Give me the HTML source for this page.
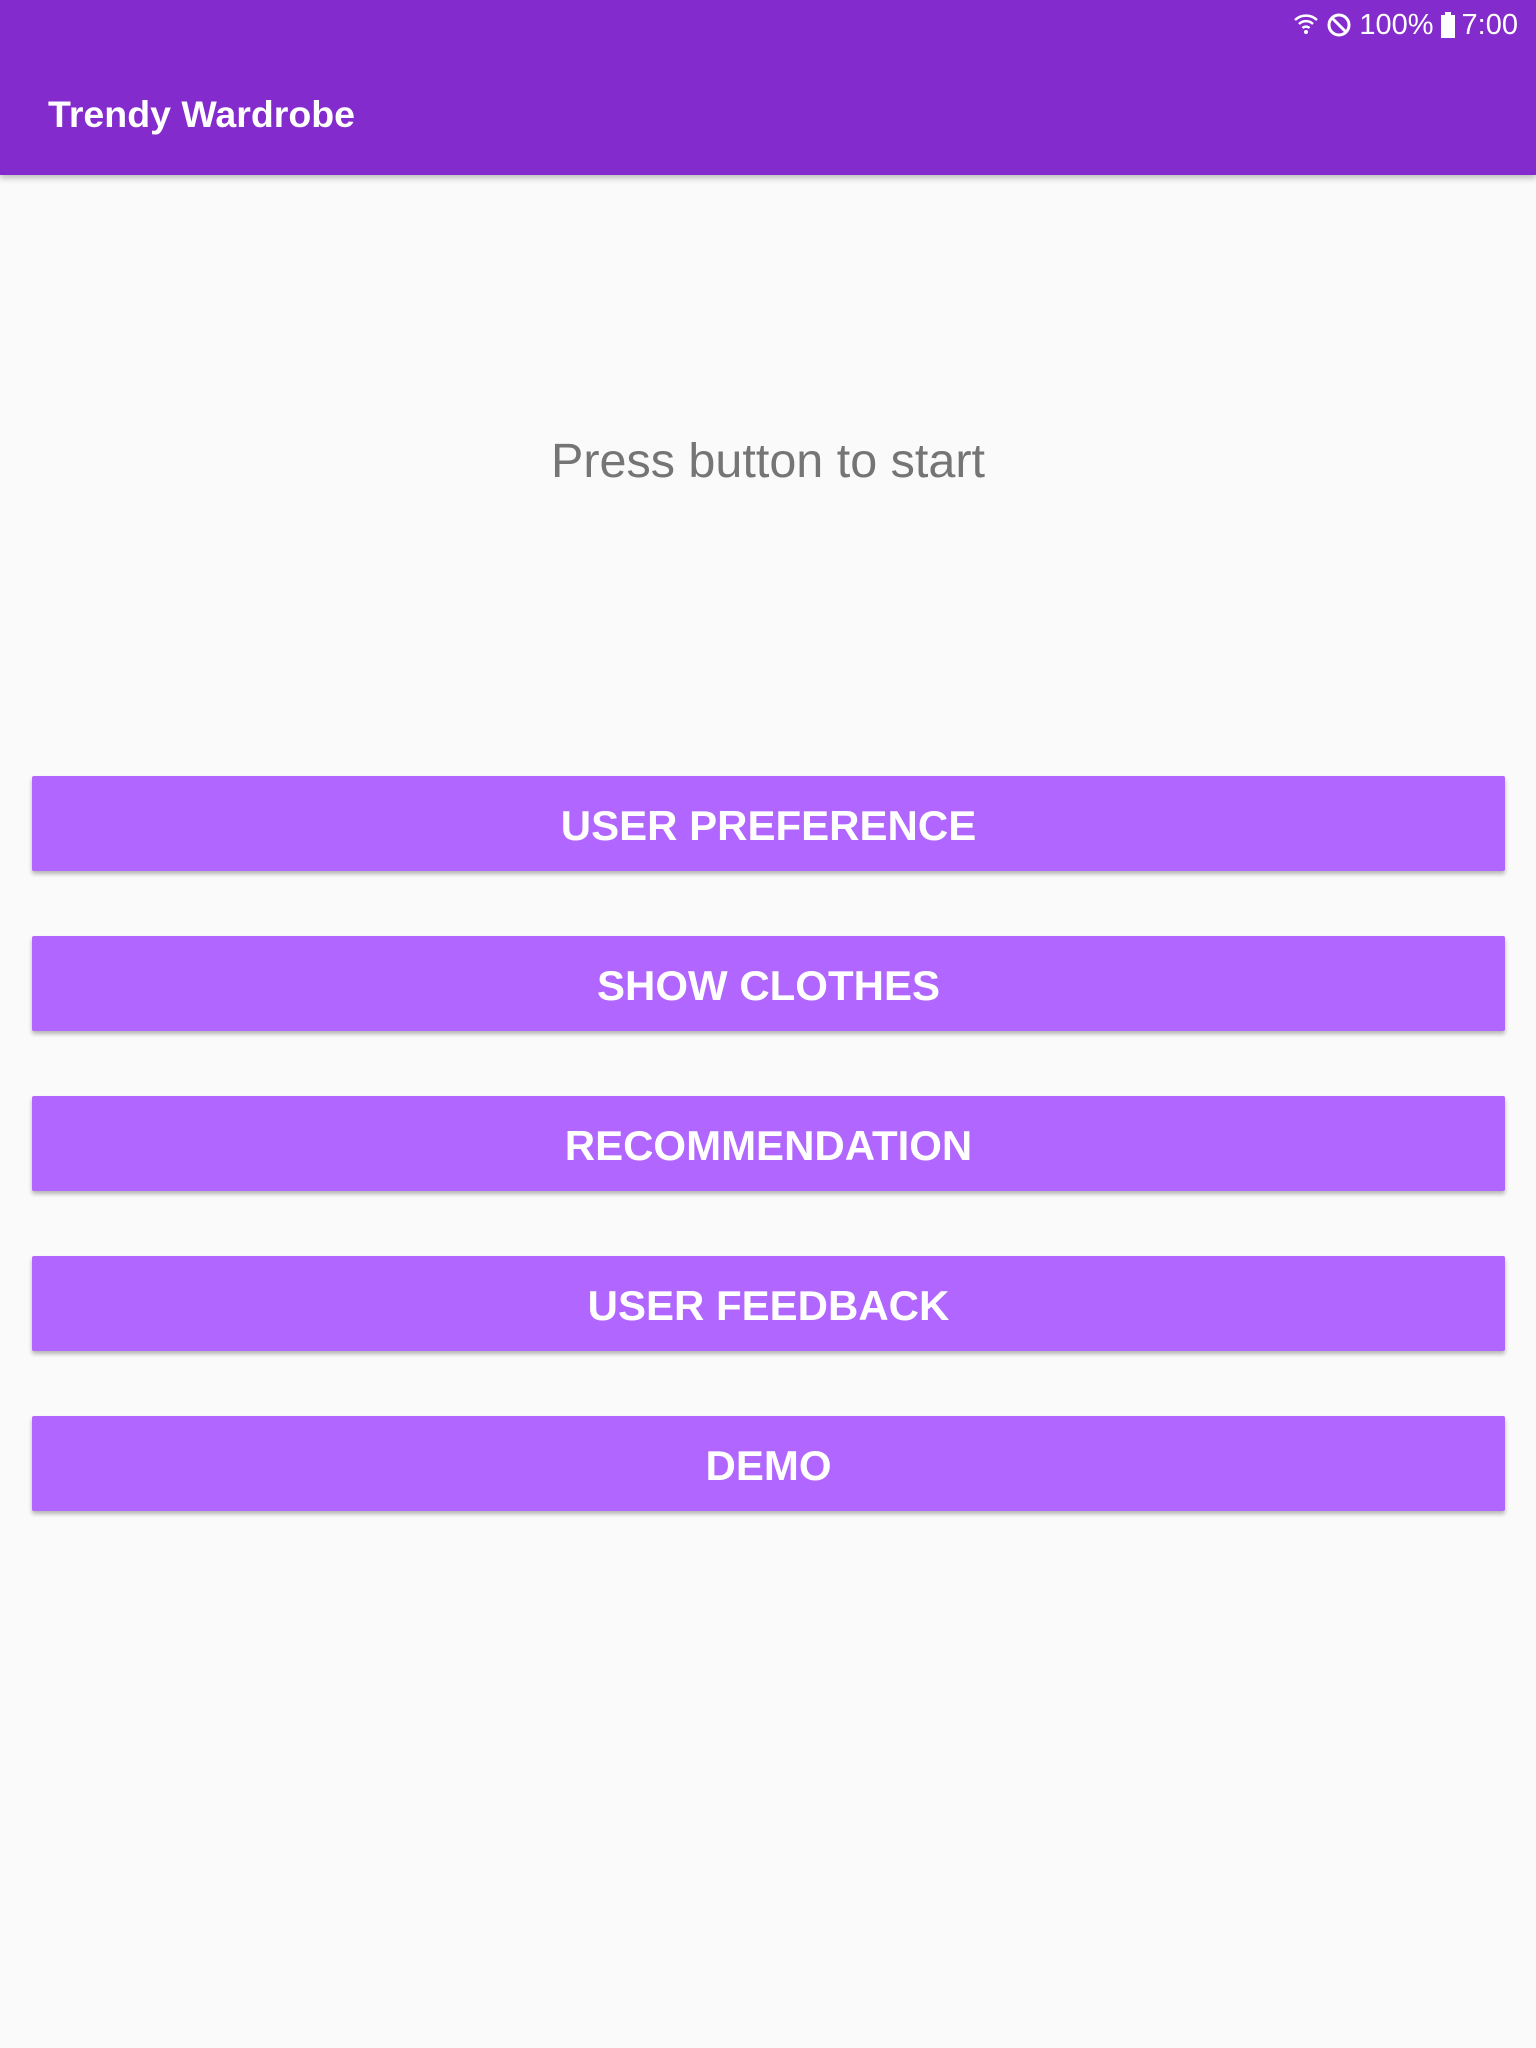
<!DOCTYPE html>
<html><head><meta charset="utf-8"><style>
body{margin:0;width:1536px;height:2048px;background:#fafafa;font-family:"Liberation Sans",sans-serif;position:relative;overflow:hidden}
.bar{position:absolute;left:0;top:0;width:1536px;height:175px;background:#832bcd;box-shadow:0 3px 6px rgba(0,0,0,.25)}
.title{position:absolute;left:48px;top:89px;color:#fff;font-size:37.5px;font-weight:bold;line-height:50px}
.status{position:absolute;right:18px;top:8px;color:#fff;font-size:29px;line-height:34px;display:flex;align-items:center;gap:6px}
.msg{position:absolute;left:0;width:1536px;top:431px;text-align:center;color:#757575;font-size:48.5px;line-height:60px}
.btn{position:absolute;left:32px;width:1473px;height:95px;background:#b066ff;box-shadow:0 3px 4px rgba(0,0,0,.28);color:#fff;font-size:42px;font-weight:bold;text-align:center;line-height:99px;border-radius:2px}
</style></head><body>
<div class="bar">
<div class="status">
<svg width="26" height="28" viewBox="0 0 26 28"><path d="M2 9a16 16 0 0 1 22 0M6 13a10 10 0 0 1 14 0M9.5 17a5 5 0 0 1 7 0" stroke="#fff" stroke-width="2.5" fill="none"/><circle cx="13" cy="21" r="2" fill="#fff"/></svg>
<svg width="28" height="28" viewBox="0 0 28 28"><circle cx="14" cy="14" r="10" stroke="#fff" stroke-width="3" fill="none"/><path d="M7 7l14 14" stroke="#fff" stroke-width="3"/></svg>
<span>100%</span>
<svg width="16" height="28" viewBox="0 0 16 28"><rect x="1" y="4" width="14" height="23" fill="#fff"/><rect x="5" y="1" width="6" height="4" fill="#fff"/></svg>
<span>7:00</span>
</div>
<div class="title">Trendy Wardrobe</div>
</div>
<div class="msg">Press button to start</div>
<div class="btn" style="top:776px">USER PREFERENCE</div>
<div class="btn" style="top:936px">SHOW CLOTHES</div>
<div class="btn" style="top:1096px">RECOMMENDATION</div>
<div class="btn" style="top:1256px">USER FEEDBACK</div>
<div class="btn" style="top:1416px">DEMO</div>
</body></html>
